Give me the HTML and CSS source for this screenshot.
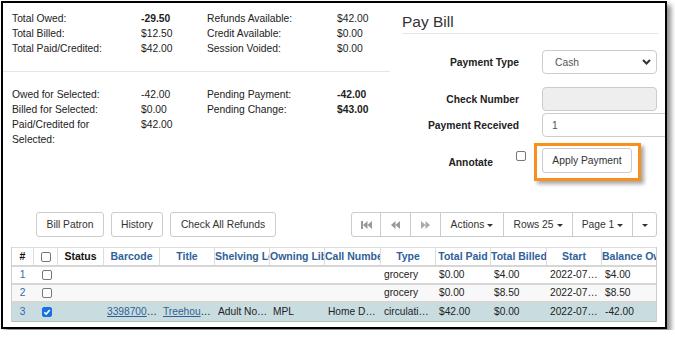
FILE: index.html
```html
<!DOCTYPE html>
<html>
<head>
<meta charset="utf-8">
<title>Pay Bill</title>
<link rel="stylesheet" href="styles.css">
</head>
<body>
<div class="shot">

<div class="top">
<div class="summary">
  <div class="sum-grid">
    <span class="lbl">Total Owed:</span><span class="strong">-29.50</span>
    <span class="lbl">Refunds Available:</span><span>$42.00</span>
    <span class="lbl">Total Billed:</span><span>$12.50</span>
    <span class="lbl">Credit Available:</span><span>$0.00</span>
    <span class="lbl">Total Paid/Credited:</span><span>$42.00</span>
    <span class="lbl">Session Voided:</span><span>$0.00</span>
  </div>
  <div class="sep"></div>
  <div class="sum-grid">
    <span class="lbl">Owed for Selected:</span><span>-42.00</span>
    <span class="lbl">Pending Payment:</span><span class="strong">-42.00</span>
    <span class="lbl">Billed for Selected:</span><span>$0.00</span>
    <span class="lbl">Pending Change:</span><span class="strong">$43.00</span>
    <span class="lbl">Paid/Credited for Selected:</span><span>$42.00</span>
    <span></span><span></span>
  </div>
</div>

<div class="paybill">
  <h2 class="pay-title">Pay Bill</h2>
  <div class="form-row row-type">
    <label class="form-label">Payment Type</label>
    <div class="select"><span>Cash</span>
      <svg width="9" height="6" viewBox="0 0 9 6"><path d="M1 1l3.5 3.5L8 1" fill="none" stroke="#333" stroke-width="2"/></svg>
    </div>
  </div>
  <div class="form-row row-check">
    <label class="form-label">Check Number</label>
    <div class="input disabled"></div>
  </div>
  <div class="form-row row-recv">
    <label class="form-label">Payment Received</label>
    <div class="input wide">1</div>
  </div>
  <div class="form-row row-annot">
    <label class="annot-label">Annotate</label>
    <span class="cb annot-cb"></span>
    <div class="hilite"><button class="btn apply">Apply Payment</button></div>
  </div>
</div>
</div>

<div class="toolbar">
  <div class="actions">
    <button class="btn b-bill">Bill Patron</button>
    <button class="btn b-hist">History</button>
    <button class="btn b-refund">Check All Refunds</button>
  </div>
  <div class="pager">
    <span class="seg s-first"><svg width="11" height="8" viewBox="0 0 11 8"><rect width="2" height="8"/><path d="M6.5 0L2 4l4.5 4zM11 0L6.5 4 11 8z"/></svg></span>
    <span class="seg s-prev"><svg width="9" height="8" viewBox="0 0 9 8"><path d="M4.5 0L0 4l4.5 4zM9 0L4.5 4 9 8z"/></svg></span>
    <span class="seg s-next"><svg width="9" height="8" viewBox="0 0 9 8"><path d="M0 0l4.5 4L0 8zM4.5 0L9 4 4.5 8z"/></svg></span>
    <span class="seg s-actions">Actions <i class="caret"></i></span>
    <span class="seg s-rows">Rows 25 <i class="caret"></i></span>
    <span class="seg s-page">Page 1 <i class="caret"></i></span>
    <span class="seg s-more"><i class="caret"></i></span>
  </div>
</div>

<div class="grid">
  <div class="grid-head">
    <span class="plain">#</span>
    <span><i class="cb"></i></span>
    <span class="plain">Status</span>
    <span>Barcode</span>
    <span>Title</span>
    <span>Shelving Location</span>
    <span>Owning Library</span>
    <span>Call Number</span>
    <span>Type</span>
    <span>Total Paid</span>
    <span>Total Billed</span>
    <span>Start</span>
    <span>Balance Owed</span>
  </div>
  <div class="grid-row">
    <span class="num">1</span><span class="cbcell"><i class="cb"></i></span>
    <span></span><span></span><span></span><span></span><span></span><span></span>
    <span class="ty">grocery</span><span>$0.00</span><span>$4.00</span><span>2022-07-14 10:32</span><span>$4.00</span>
  </div>
  <div class="grid-row odd">
    <span class="num">2</span><span class="cbcell"><i class="cb"></i></span>
    <span></span><span></span><span></span><span></span><span></span><span></span>
    <span class="ty">grocery</span><span>$0.00</span><span>$8.50</span><span>2022-07-14 10:33</span><span>$8.50</span>
  </div>
  <div class="grid-row selected">
    <span class="num">3</span><span class="cbcell"><i class="cb checked"><svg width="8" height="8" viewBox="0 0 8 8"><path d="M1.3 4.2l1.9 1.9L6.8 2" fill="none" stroke="#fff" stroke-width="1.6"/></svg></i></span>
    <span></span>
    <span><a href="#">33987000123456</a></span>
    <span><a href="#">Treehouse of Horror</a></span>
    <span>Adult Nonfiction</span>
    <span>MPL</span>
    <span>Home Depot 1-2-3</span>
    <span class="ty">circulation</span><span>$42.00</span><span>$0.00</span><span>2022-07-02 09:15</span><span>-42.00</span>
  </div>
</div>

</div>
</body>
</html>
```

FILE: styles.css
```css
/* Pay bill screen, cropped screenshot
*/

body
{ margin: 0;
font-family: "Liberation Sans", Arial, sans-serif;
font-size: 10.3px;
color: #222;
background: #fff;
}

div.shot
{ margin: 1px;
width: 662px;
height: 324px;
border: 2px solid #000;
box-shadow: 4px 4px 5px rgba(0,0,0,0.45);
overflow: hidden;
background: #fff;
}

/* Summary */

div.top
{ display: flex;
}

div.summary
{ flex: none;
width: 388px;
padding-top: 8px;
}

div.sum-grid
{ display: grid;
grid-template-columns: 129px 66px 130px 60px;
padding-left: 9px;
line-height: 15px;
}

span.lbl
{ padding-right: 14px;
}

span.strong
{ font-weight: bold;
}

div.sep
{ width: 387px;
border-top: 1px solid #e5e5e5;
margin: 15px 0;
}

/* Pay bill form */

div.paybill
{ flex: 1;
padding-left: 11px;
}

h2.pay-title
{ margin: 10px 0 0;
width: 256px;
font-size: 15.5px;
font-weight: normal;
line-height: 18px;
padding-bottom: 2px;
border-bottom: 1px solid #e5e5e5;
color: #333;
}

div.form-row
{ display: flex;
align-items: center;
}

div.row-type { margin-top: 16px; }
div.row-check { margin-top: 13px; }
div.row-recv { margin-top: 2px; }
div.row-annot { margin-top: 6px; }

label.form-label
{ flex: none;
width: 117px;
margin-right: 23px;
text-align: right;
font-weight: bold;
}

label.annot-label
{ flex: none;
width: 91px;
text-align: right;
font-weight: bold;
}

div.select, div.input
{ flex: none;
box-sizing: border-box;
width: 115px;
height: 24px;
border: 1px solid #ccc;
border-radius: 4px;
display: flex;
align-items: center;
color: #555;
}

div.select
{ justify-content: space-between;
padding: 0 5px 0 12px;
}

div.input.disabled
{ background: #eee;
}

div.input.wide
{ width: 160px;
padding-left: 9px;
}

.cb
{ display: inline-block;
box-sizing: border-box;
width: 10px;
height: 10px;
border: 1px solid #777;
border-radius: 2px;
background: #fff;
vertical-align: middle;
}

.cb.checked
{ border-color: #1a6fe0;
background: #1a6fe0;
position: relative;
}

.cb.checked svg
{ position: absolute;
left: 0;
top: 0;
}

span.annot-cb
{ align-self: flex-start;
margin: 8px 0 0 23px;
}

div.hilite
{ margin-left: 8px;
border: 3px solid #f7901e;
padding: 2px 6px 5px 5px;
box-shadow: 3px 3px 4px rgba(0,0,0,0.35);
}

button.btn
{ display: flex;
align-items: center;
justify-content: center;
box-sizing: border-box;
height: 25px;
padding: 0;
border: 1px solid #ccc;
border-radius: 3px;
background: #fff;
font: inherit;
color: #333;
}

button.apply { width: 90px; }

/* Toolbar */

div.toolbar
{ display: flex;
justify-content: space-between;
margin-top: 31px;
padding: 0 8px 0 33px;
}

div.actions
{ display: flex;
gap: 7px;
}

button.b-bill { width: 68px; }
button.b-hist { width: 52px; }
button.b-refund { width: 106px; }

div.pager
{ display: flex;
height: 25px;
box-sizing: border-box;
border: 1px solid #ccc;
border-radius: 3px;
color: #333;
}

span.seg
{ display: flex;
align-items: center;
justify-content: center;
box-sizing: border-box;
border-left: 1px solid #ccc;
gap: 3px;
}

span.seg svg
{ fill: #999;
}

span.s-first { width: 28px; border-left: none; }
span.s-prev { width: 30px; }
span.s-next { width: 30px; }
span.s-next svg { fill: #aaa; }
span.s-actions { width: 63px; }
span.s-rows { width: 69px; }
span.s-page { width: 60px; }
span.s-more { width: 24px; }

i.caret
{ display: inline-block;
width: 0;
height: 0;
border-top: 3px solid #333;
border-left: 3px solid transparent;
border-right: 3px solid transparent;
margin-top: 1px;
}

/* Grid */

div.grid
{ margin: 10px 0 0 8px;
width: 646px;
box-sizing: border-box;
border-left: 1px solid #ccc;
border-right: 1px solid #ccc;
}

div.grid-head, div.grid-row
{ display: grid;
grid-template-columns: 21px 24px 46px 56px 55px 55px 55px 56px 55px 55px 56px 55px 55px;
}

div.grid-head
{ border-top: 1px solid #ddd;
height: 17px;
line-height: 17px;
font-size: 10.5px;
font-weight: bold;
color: #2f6199;
}

div.grid-head span
{ text-align: center;
white-space: nowrap;
overflow: hidden;
border-left: 1px solid #ddd;
}

div.grid-head span:first-child
{ border-left: none;
}

div.grid-head span.plain
{ color: #111;
}

div.grid-row
{ border-top: 2px solid #d6d6d6;
height: 16px;
line-height: 16px;
font-size: 10.2px;
}

div.grid-row.odd
{ background: #f8f8f8;
}

div.grid-row.selected
{ background: #c9dde1;
height: 18px;
line-height: 18px;
border-bottom: 1px solid #bbb;
}

div.grid-row span
{ padding: 0 1px 0 4px;
white-space: nowrap;
overflow: hidden;
text-overflow: ellipsis;
}

div.grid-row span.ty
{ padding-right: 6px;
}

div.grid-row span.num
{ padding: 0;
text-align: center;
color: #2f6aae;
}

div.grid-row span.cbcell
{ padding: 0 0 0 9px;
}

div.grid-row a
{ color: #2f5f95;
}
```
